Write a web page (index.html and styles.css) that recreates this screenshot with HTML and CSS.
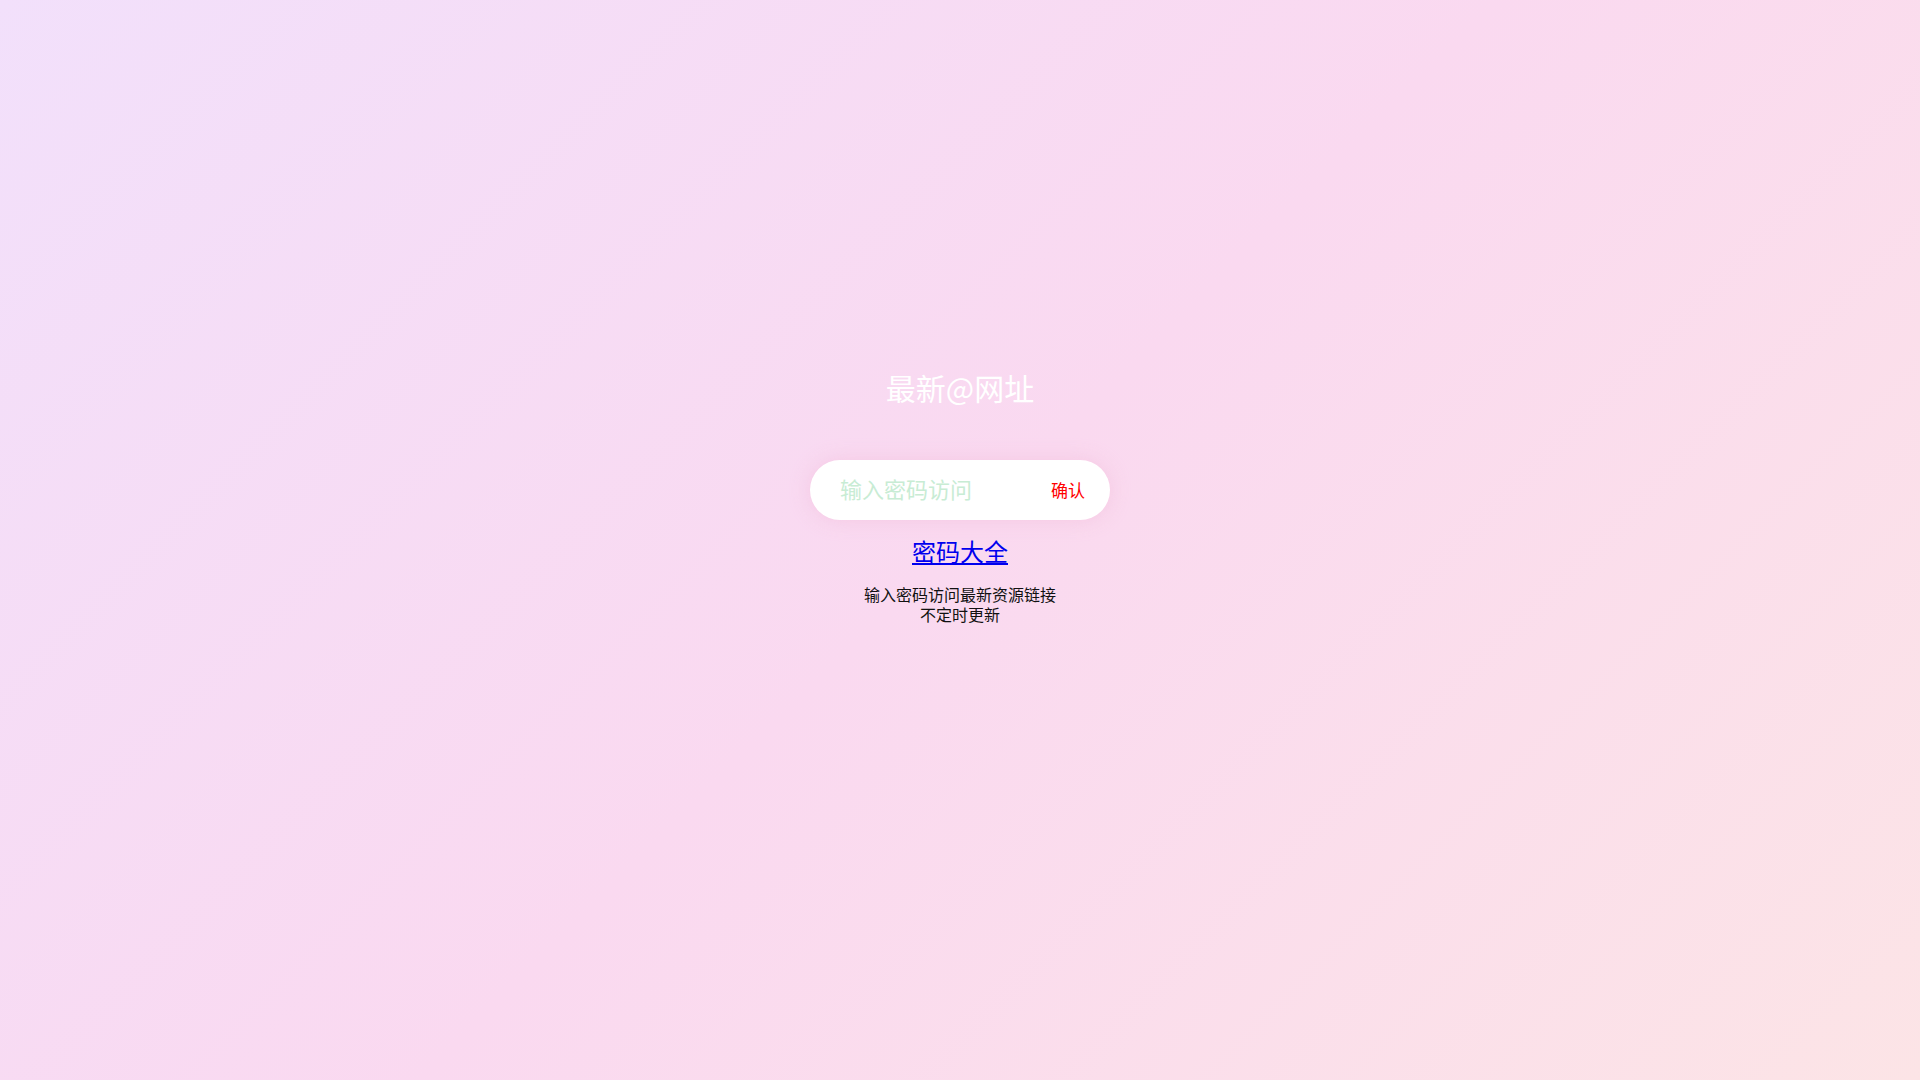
FILE: index.html
```html
<!DOCTYPE html>
<html lang="zh-CN">
<head>
<meta charset="utf-8">
<title>最新@网址</title>
<link rel="stylesheet" href="styles.css">
</head>
<body>
  <div class="page">
    <h1 class="site-title">最新@网址</h1>
    <form class="pass-form" onsubmit="return false;">
      <input type="password" class="pass-input" placeholder="输入密码访问">
      <button type="submit" class="pass-btn">确认</button>
    </form>
    <a class="pass-link" href="#">密码大全</a>
    <div class="tips">
      输入密码访问最新资源链接<br>
      不定时更新
    </div>
  </div>
</body>
</html>
```

FILE: styles.css
```css
html, body {
  margin: 0;
  height: 100%;
}

body {
  font-family: "Noto Sans CJK SC", "Noto Sans", sans-serif;
  background: linear-gradient(135deg, #f2e0fb 0%, #fad9f0 50%, #fce4e6 100%);
  color: #111;
}

.page {
  display: flex;
  flex-direction: column;
  align-items: center;
  padding-top: 367px;
}

.site-title {
  margin: 0;
  font-size: 30px;
  line-height: 40px;
  font-weight: normal;
  color: #fff;
}

.pass-form {
  margin-top: 53px;
  width: 300px;
  height: 60px;
  box-sizing: border-box;
  display: flex;
  align-items: center;
  padding: 0 25px 0 30px;
  background: #fff;
  border-radius: 30px;
  box-shadow: 0 0 20px rgba(240, 180, 210, 0.45);
}

.pass-input {
  flex: 1;
  min-width: 0;
  border: none;
  outline: none;
  background: none;
  padding: 0 0 5px;
  font-family: inherit;
  font-size: 22px;
  color: #6c6;
}

.pass-input::placeholder {
  color: #c8ecd4;
}

.pass-btn {
  border: none;
  background: none;
  padding: 0 0 2px;
  font-family: inherit;
  font-size: 17px;
  color: #f00;
  cursor: pointer;
}

.pass-link {
  margin-top: 16px;
  font-size: 24px;
  line-height: 30px;
  color: #00e;
}

.tips {
  margin-top: 18px;
  font-size: 16px;
  line-height: 20px;
  text-align: center;
}
```
